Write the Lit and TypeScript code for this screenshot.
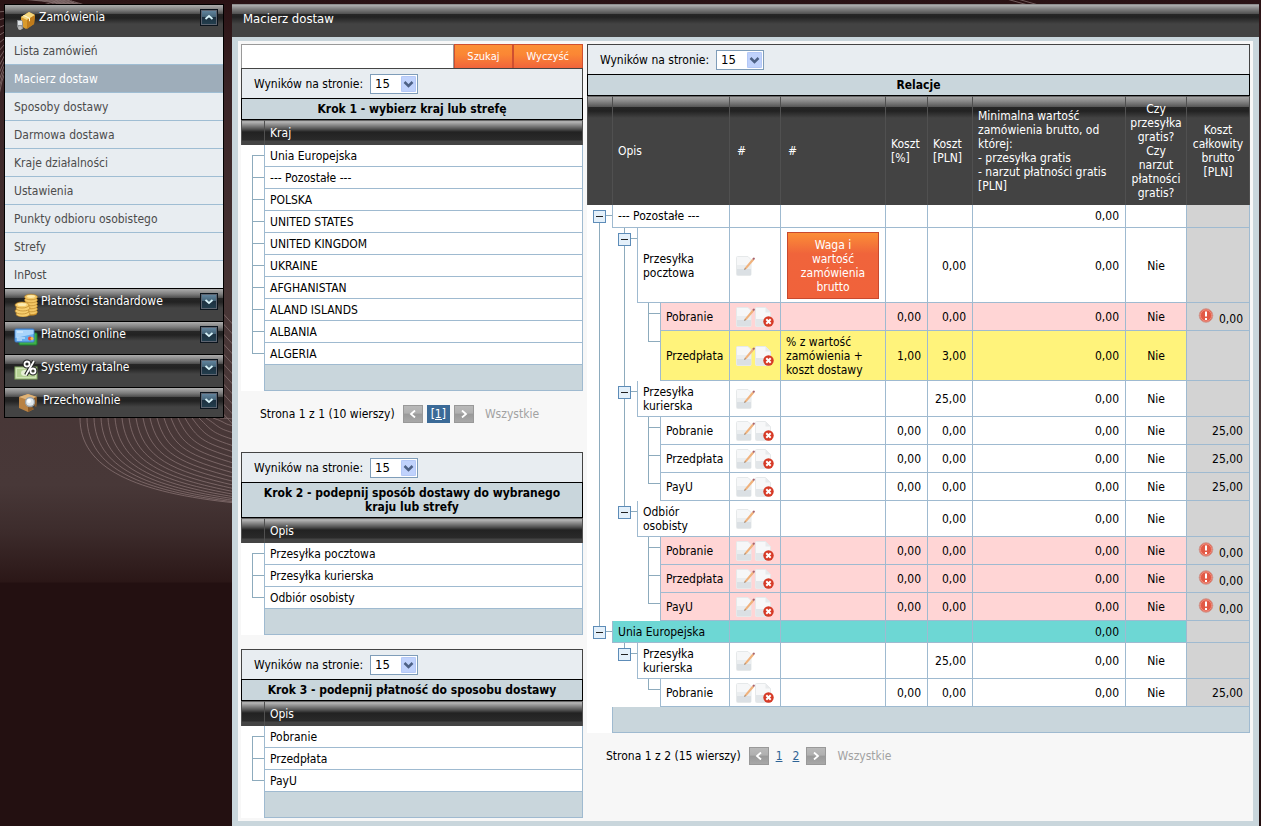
import { LitElement, html, svg, css, nothing } from "lit";
import { customElement, property } from "lit/decorators.js";
import { classMap } from "lit/directives/class-map.js";

const FONT = css`"DejaVu Sans Condensed", Tahoma, sans-serif`;

const shared = css`
  * { box-sizing: border-box; }
  button, select, input { font: inherit; margin: 0; }
  button { cursor: pointer; }
  table { border-collapse: separate; border-spacing: 0; width: 100%; table-layout: fixed; }
  caption, th, td { padding: 0; }
`;

/* ---------- decorative lines behind the page ---------- */

const lowerLines = Array.from({ length: 21 }, (_, i) => {
  const x = 80 + 7 * i;
  const endY = 503 - 0.8 * i - 0.17 * i * i;
  const drop = endY - 418;
  return `M${x} 418C${x + i * 0.8} ${418 + drop * 0.6} ${x + (236 - x) * 0.36} ${endY - drop * (0.12 + i * 0.012)} 236 ${endY}`;
}).join("");
const sideLines = Array.from({ length: 11 }, (_, i) => `M218 ${308 + i * 10}L238 ${330 + i * 10}`).join("");
const upperLines = Array.from({ length: 12 }, (_, i) =>
  `M${-2} ${100 - i * 8}Q${10 + i * 3} ${20 - i} ${86 - i * 2} ${8 - i}`).join("");
const topLines = Array.from({ length: 7 }, (_, i) =>
  `M${1 + i * 7} -2Q${40 + i * 6} -1 ${84 + i} 8`).join("");

/* ---------- icons ---------- */

const icons = {
  parcel: svg`<svg width="22" height="22" viewBox="-1 -1 22 22" aria-hidden="true">
    <path d="M6 7 14 2l6 3-1 9-8 5-5-3z" fill="#d99a2c"/><path d="M6 7 14 2l6 3-8 5z" fill="#f5d77e"/>
    <path d="m12 10 8-5-1 9-7 5z" fill="#c07c1c"/><path d="m9 5 6 3v3l-1 .6V8.500L8 5.700z" fill="#fff4cf"/>
    <path d="M2 10h5l1 3v6H4l-2-2z" fill="#8c8f92"/><path d="M3 11h4v4H3z" fill="#dfe3e6"/><circle cx="5" cy="18" r="2" fill="#bbb"/></svg>`,
  coins: svg`<svg width="24" height="24" viewBox="0 0 24 24" aria-hidden="true">
    <path d="M11 3v18c3 2 10 2 12 0V3z" fill="#c88a20"/>
    ${[19, 16, 13, 10, 7, 4].map((y) => svg`<ellipse cx="17" cy=${y} rx="6.500" ry="2.800" fill="#f3c765" stroke="#b27c22" stroke-width=".6"/>`)}
    <ellipse cx="17" cy="3.500" rx="4" ry="1.400" fill="#fde9a8"/>
    ${[21, 18, 15, 12].map((y, i) => svg`<ellipse cx=${i % 2 ? 8 : 9} cy=${y} rx="7" ry="3" fill="#f6cd6d" stroke="#b27c22" stroke-width=".6"/>`)}
    <ellipse cx="8" cy="11.500" rx="4.500" ry="1.500" fill="#fdebb0"/></svg>`,
  cards: svg`<svg width="24" height="24" viewBox="0 0 24 24" aria-hidden="true">
    <rect x="5" y="7" width="18" height="12" rx="1" fill="#3fae49" stroke="#1f7a30"/>
    <rect x="1" y="3" width="19" height="13" rx="1" fill="#66aef0" stroke="#3b7ac8"/>
    <path d="M1.500 4h18v4l-18 4z" fill="#a9d4fb"/><path d="M3 6h6M3 12h8M3 14h5" stroke="#e8f4ff"/>
    <circle cx="16" cy="12.500" r="2" fill="#e04a3a"/><circle cx="18" cy="12.500" r="1.500" fill="#f3c34a"/></svg>`,
  rates: svg`<svg width="24" height="24" viewBox="0 0 24 24" aria-hidden="true">
    <rect x="1" y="8" width="22" height="12" fill="#cfe3b5" stroke="#86ab65"/>
    <rect x="3" y="10" width="18" height="8" fill="#b4d193"/><ellipse cx="11" cy="14" rx="4" ry="3" fill="#e6f0d6"/>
    <g fill="none" stroke="#222" stroke-width="4"><circle cx="13" cy="5" r="2.500"/><circle cx="19" cy="12" r="2.500"/><path d="M20 2 12 16"/></g>
    <g fill="none" stroke="#fff" stroke-width="1.800"><circle cx="13" cy="5" r="2.500"/><circle cx="19" cy="12" r="2.500"/><path d="M20 2 12 16"/></g></svg>`,
  storage: svg`<svg width="26" height="24" viewBox="-1 0 26 24" aria-hidden="true">
    <path d="M4 5 13 2l9 3-1 11-8 4-9-4z" fill="#b98243"/><path d="m4 5 9-3 9 3-9 3z" fill="#e0b478"/>
    <path d="m13 8 9-3-1 11-8 4z" fill="#8a5a28"/><path d="m17 13 4 4" stroke="#444" stroke-width="2.500"/>
    <circle cx="15" cy="10" r="4.500" fill="#dfe7ec" stroke="#9aa1a6" stroke-width="1.300"/><circle cx="14" cy="9" r="2" fill="#fff"/></svg>`,
};

const editIcon = svg`<svg width="19" height="20" viewBox="0 0 19 20" aria-hidden="true">
  <path d="M.5 1.500Q.5.5 1.500.5h10.500l3 3v15q0 1-1 1H1.500q-1 0-1-1z" fill="#f6f7f8" stroke="#e6e9ea"/>
  <path d="M1 13h14v5.500q0 .5-.5.5H1.500q-.5 0-.5-.5z" fill="#dbe0e4"/><path d="M1 9h14v4H1z" fill="#eaedef"/>
  <path d="m8.300 13.800.7-2.300 7.300-8.700 1.700 1.400-7.400 8.600z" fill="#f0b27c"/><path d="m8.300 13.800.5-1.600 1.100.9z" fill="#5a5048"/>
  <path d="m16.300 2.800 1-1.100q.5-.4 1.100 0t.5 1l-1 1.500z" fill="#a9646c"/></svg>`;

const deleteIcon = svg`<svg width="19" height="20" viewBox="0 0 19 20" aria-hidden="true">
  <path d="M.5 1.500Q.5.5 1.500.5h9l5 5v13q0 1-1 1h-13q-1 0-1-1z" fill="#f7f8f9" stroke="#e6e9ea"/>
  <path d="M1 12h14v7H1z" fill="#e2e6e9"/><path d="M10.500.5v5h5" fill="#e8eaec"/>
  <circle cx="13.500" cy="14.500" r="5.200" fill="#d63a26"/><path d="m11.300 12.300 4.400 4.400m0-4.400-4.400 4.400" stroke="#fff" stroke-width="2"/></svg>`;

const alertIcon = svg`<svg width="16" height="16" viewBox="0 0 16 16" role="img" aria-label="Uwaga">
  <circle cx="8" cy="7.500" r="6.800" fill="#e25a46" stroke="#cf9a92"/><circle cx="8" cy="7.500" r="5.600" fill="none" stroke="#f19a8c" stroke-width=".8"/>
  <path d="M8 3.500v5" stroke="#fff" stroke-width="2"/><path d="M8 10v2" stroke="#fff" stroke-width="2"/></svg>`;

/* ---------- sidebar ---------- */

@customElement("side-menu")
export class SideMenu extends LitElement {
  static styles = [shared, css`
    :host { display: block; border: 1px solid #000; border-top: 0; font: 12px/14px ${FONT}; background: #444; }
    .head { display: flex; align-items: flex-start; width: 100%; height: 33px; padding: 4px 5px 0 9px; gap: 3px;
      border: 0; border-top: 1px solid #000; color: #fff; text-align: left;
      background: linear-gradient(#adadad 0, #7e7e7e 5px, #4a4a4a 9px, #262626 9px, #222 13px, #434343 19px); }
    .head.last { height: 30px; }
    .head svg { flex: none; }
    .label { flex: 1; padding-top: 1px; }
    .head .chev { border: 1px solid #0b141d; outline: 1px solid #5d6470; outline-offset: -2px; background: linear-gradient(#6689a3, #456478 45%, #1c3040 50%, #24404f); }
    ul { list-style: none; margin: 0; padding: 0; background: #e8edf1; }
    a { display: block; padding: 7px 9px 6px; border-bottom: 1px solid #9fbdd3; color: #4c4c4c; text-decoration: none; }
    a.current { background: #9eadba; color: #fff; }
    li:last-child a { border-bottom: 0; }
  `];

  items = ["Lista zamówień", "Macierz dostaw", "Sposoby dostawy", "Darmowa dostawa", "Kraje działalności",
    "Ustawienia", "Punkty odbioru osobistego", "Strefy", "InPost"];
  groups = [
    { icon: icons.coins, label: "Płatności standardowe" },
    { icon: icons.cards, label: "Płatności online" },
    { icon: icons.rates, label: "Systemy ratalne" },
    { icon: icons.storage, label: "Przechowalnie" },
  ];

  head(icon: unknown, label: string, open: boolean, last = false) {
    return html`<button class=${classMap({ head: true, last })} aria-expanded=${open}>
      ${icon}<span class="label">${label}</span>
      <svg class="chev" width="18" height="17" viewBox="0 0 16 15" aria-hidden="true">
        <path d=${open ? "m4.500 9 3.500-3 3.500 3" : "m4.500 6 3.500 3 3.500-3"} fill="none" stroke="#d8f4fa" stroke-width="1.800"/></svg>
    </button>`;
  }

  render() {
    return html`<nav>
      ${this.head(icons.parcel, "Zamówienia", true)}
      <ul>${this.items.map((t) => html`<li><a href="#" class=${classMap({ current: t === "Macierz dostaw" })}>${t}</a></li>`)}</ul>
      ${this.groups.map((g, i) => this.head(g.icon, g.label, false, i === 3))}
    </nav>`;
  }
}

/* ---------- page-size bar ---------- */

@customElement("size-bar")
export class SizeBar extends LitElement {
  static styles = [shared, css`
    :host { display: block; }
    label { display: flex; align-items: center; gap: 7px; height: 30px; padding-left: 12px;
      background: #e8edf1; border: 1px solid #444; border-bottom: 0; font: 12px/14px ${FONT}; }
    .pick { display: grid; }
    .pick > * { grid-area: 1 / 1; }
    select { appearance: none; width: 48px; height: 20px; padding: 0 4px; border: 1px solid #7f9db9; border-radius: 0;
      background: #fff; color: #000; font-size: 13px; }
    .arrow { justify-self: end; align-self: center; margin-right: 2px; pointer-events: none; }
  `];
  render() {
    return html`<label>Wyników na stronie:
      <span class="pick"><select><option>15</option><option>30</option></select>
        <svg class="arrow" width="15" height="16" viewBox="0 0 15 16" aria-hidden="true">
          <rect width="15" height="16" rx="1" fill="#c0d2fc"/><rect x=".5" y=".5" width="14" height="15" rx="1" fill="none" stroke="#b4c8f6"/>
          <path d="m3.500 6 4 4 4-4" fill="none" stroke="#4d6185" stroke-width="2.500"/></svg></span></label>`;
  }
}

/* ---------- pager ---------- */

@customElement("page-nav")
export class PageNav extends LitElement {
  @property({ type: Number }) pages = 1;
  @property({ type: Number }) rows = 0;
  static styles = [shared, css`
    :host { display: flex; align-items: center; height: 61px; padding: 0 19px 15px; font: 12px/14px ${FONT}; }
    button { display: grid; place-items: center; width: 20px; height: 18px; padding: 0; border: 1px solid #999;
      background: linear-gradient(#b9b9b9, #b0b0b0 45%, #999 50%, #a8a8a8); }
    .info { margin-right: 8px; }
    a { color: #2e6496; margin: 0 7px; }
    a.on { background: #3b6a97; color: #fff; padding: 2px 4px; margin: 0 4px; }
    a + a { margin-left: 3px; }
    .all { color: #a2a2a2; margin-left: 11px; }
  `];
  arrow(d: string, label: string) {
    return html`<button aria-label=${label}><svg width="8" height="8" viewBox="0 0 8 8" aria-hidden="true"><path d=${d} fill="none" stroke="#fff" stroke-width="1.800"/></svg></button>`;
  }
  render() {
    return html`<span class="info">Strona 1 z ${this.pages} (${this.rows} wierszy)</span>
      ${this.arrow("M6 .5 2 4l4 3.500", "Poprzednia")}
      ${this.pages === 1 ? html`<a class="on" href="#">[1]</a>` : html`<a href="#">1</a><a href="#">2</a>`}
      ${this.arrow("M2 .5 6 4 2 7.500", "Następna")}
      <span class="all">Wszystkie</span>`;
  }
}

const gridStyles = css`
  :host { display: block; --line: #9fbad0; --tree: #8dabbd; font: 12px/14px ${FONT}; color: #000; }
  .title { border: 1px solid #000; background: #c9d6dc; font-weight: bold; text-align: center; padding: 3px 8px; margin: 0;
    font-size: 12px; line-height: 14px; }
  table { background: #fff; }
  th { color: #fff; font-weight: normal; text-align: left; padding: 5px; border-left: 1px solid #505050; border-top: 1px solid #666; }
  td { border-left: 1px solid var(--line); border-bottom: 1px solid var(--line); padding: 4px 5px 3px; }
  td:last-child, th:last-child { border-right: 1px solid var(--line); }
  th:last-child { border-right-color: #505050; }
  td.foot { height: 26px; background: #c9d6dc; }
  td.tree { border: 0; padding: 0; vertical-align: top; background-repeat: no-repeat; --x: 12px;
    background-image: linear-gradient(var(--tree), var(--tree)), linear-gradient(var(--tree), var(--tree));
    background-size: 1px var(--vh, 0), 100% var(--hh, 0);
    background-position: var(--x) var(--vy, 0), var(--x) 10px; }
  td.leaf { --x: 11px; }
  td.thru { --vh: 100%; }
  td.end { --vh: 11px; }
  td.start { --vh: 100%; --vy: 10px; }
  td.only { --vh: 0; }
  td.tick { --hh: 1px; }
`;

/* ---------- short list panels ---------- */

@customElement("pick-list")
export class PickList extends LitElement {
  @property() heading = "";
  @property() column = "";
  @property({ attribute: false }) rows: string[] = [];
  static styles = [shared, gridStyles, css`
    .head { background: linear-gradient(#999 0, #b4b4b4 2px, #525252 9px, #222 12px, #2a2a2a 20px, #444 21px); }
    th { height: 25px; padding: 0 5px; }
    .c0 { width: 23px; }
  `];
  render() {
    const n = this.rows.length;
    return html`<size-bar></size-bar><h2 class="title">${this.heading}</h2>
      <table>
        <colgroup><col class="c0"><col></colgroup>
        <thead><tr class="head"><th></th><th scope="col">${this.column}</th></tr></thead>
        <tbody>
          ${this.rows.map((r, i) => html`<tr>
            <td class=${classMap({ tree: true, leaf: true, tick: true, start: i === 0, thru: i > 0 && i < n - 1, end: i === n - 1 })}></td>
            <td>${r}</td></tr>`)}
          <tr><td class="tree only"></td><td class="foot"></td></tr>
        </tbody>
      </table>`;
  }
}

/* ---------- relations matrix ---------- */

interface Row {
  level: 0 | 1 | 2;
  tree: string[];
  name: string;
  tone?: string;
  rule?: string;
  action?: string;
  pct?: string;
  pln?: string;
  free?: string;
  total?: string;
  alert?: boolean;
}

const leaf = (name: string, tree: string[], more: Partial<Row> = {}): Row =>
  ({ level: 2, tree, name, pct: "0,00", pln: "0,00", free: "Nie", ...more });

const PINK = { tone: "pink", total: "0,00", alert: true };
const MID = ["thru", "thru", "leaf thru tick"];
const LAST = ["thru", "thru", "leaf end tick"];

const ROWS: Row[] = [
  { level: 0, tree: ["start tick"], name: "--- Pozostałe ---" },
  { level: 1, tree: ["thru", "thru tick"], name: "Przesyłka pocztowa", action: "Waga i wartość zamówienia brutto", pln: "0,00", free: "Nie" },
  leaf("Pobranie", MID, PINK),
  leaf("Przedpłata", LAST, { tone: "yellow", rule: "% z wartość zamówienia + koszt dostawy", pct: "1,00", pln: "3,00" }),
  { level: 1, tree: ["thru", "thru tick"], name: "Przesyłka kurierska", pln: "25,00", free: "Nie" },
  leaf("Pobranie", MID, { total: "25,00" }),
  leaf("Przedpłata", MID, { total: "25,00" }),
  leaf("PayU", LAST, { total: "25,00" }),
  { level: 1, tree: ["thru", "end tick"], name: "Odbiór osobisty", pln: "0,00", free: "Nie" },
  leaf("Pobranie", ["thru", "only", "leaf thru tick"], PINK),
  leaf("Przedpłata", ["thru", "only", "leaf thru tick"], PINK),
  leaf("PayU", ["thru", "only", "leaf end tick"], PINK),
  { level: 0, tree: ["end tick"], name: "Unia Europejska", tone: "teal" },
  { level: 1, tree: ["only", "end tick"], name: "Przesyłka kurierska", pln: "25,00", free: "Nie" },
  leaf("Pobranie", ["only", "only", "leaf end tick"], { total: "25,00" }),
];

@customElement("relation-grid")
export class RelationGrid extends LitElement {
  static styles = [shared, gridStyles, css`
    .head { background: linear-gradient(#aaa 0, #8a8a8a 5px, #555 11px, #262626 11px, #222 15px, #434343 22px); }
    .c25 { width: 25px; } .c23 { width: 23px; } .desc { width: 69px; } .tools { width: 51px; } .rule { width: 105px; }
    .pct { width: 42px; } .pln { width: 45px; } .free { width: 61px; } .total { width: 64px; }
    th.mid, td.mid { text-align: center; }
    th.mid { padding: 5px 2px; }
    th.hash { padding-left: 7px; }
    tbody tr:first-child td:not(.tree) { padding-bottom: 4px; }
    td.num { text-align: right; padding-right: 6px; }
    td.icons { padding-left: 6px; padding-right: 0; }
    td.sum { background: #d3d3d3; }
    .pink td:not(.tree):not(.sum) { background: #ffd5d5; }
    .yellow td:not(.tree):not(.sum) { background: #fff37b; }
    .teal td:not(.tree):not(.sum) { background: #6dd7d4; }
    .tb { display: flex; }
    .tb a { display: block; height: 20px; }
    .tb svg, .alert svg { display: block; }
    .alert { display: flex; justify-content: flex-end; align-items: flex-end; gap: 5px; }
    .alert svg { margin-bottom: 2px; }
    .toggle { display: grid; place-items: center; width: 13px; height: 13px; margin: 5px 0 0 6px; padding: 0;
      border: 1px solid #5d8cb8; background: #e4f0fa; }
    .toggle::before { content: ""; width: 7px; height: 1px; background: #222; }
    .fill { display: block; width: calc(100% - 2px); margin: 0 auto; padding: 5px 10px 4px; border: 1px solid #c8492e; color: #fff;
      background: linear-gradient(#fb8e37, #f0643b 32%, #f0623b); }
  `];

  row(r: Row) {
    const last = r.tree.length - 1;
    return html`<tr class=${r.tone ?? "plain"}>
      ${r.tree.map((t, i) => html`<td class="tree ${t}">${i === last && r.level < 2
        ? html`<button class="toggle" aria-label="Zwiń"></button>` : nothing}</td>`)}
      <td colspan=${3 - r.level}>${r.name}</td>
      <td class="icons">${r.level > 0 ? html`<div class="tb"><a href="#" aria-label="Edytuj">${editIcon}</a>
        ${r.level === 2 ? html`<a href="#" aria-label="Usuń">${deleteIcon}</a>` : nothing}</div>` : nothing}</td>
      <td>${r.action ? html`<button class="fill">${r.action}</button>` : r.rule ?? nothing}</td>
      <td class="num">${r.pct}</td>
      <td class="num">${r.pln}</td>
      <td class="num">0,00</td>
      <td class="mid">${r.free}</td>
      <td class="num sum">${r.alert ? html`<div class="alert">${alertIcon}<span>${r.total}</span></div>` : r.total}</td>
    </tr>`;
  }

  render() {
    return html`<size-bar></size-bar><h2 class="title">Relacje</h2>
      <table>
        <colgroup><col class="c25"><col class="c25"><col class="c23"><col class="desc"><col class="tools"><col class="rule">
          <col class="pct"><col class="pln"><col><col class="free"><col class="total"></colgroup>
        <thead><tr class="head"><th></th><th scope="col" colspan="3">Opis</th><th scope="col" class="hash">#</th><th scope="col" class="hash">#</th>
          <th scope="col">Koszt [%]</th><th scope="col">Koszt [PLN]</th>
          <th scope="col">Minimalna wartość zamówienia brutto, od której:<br>- przesyłka gratis<br>- narzut płatności gratis [PLN]</th>
          <th scope="col" class="mid">Czy przesyłka gratis?<br>Czy narzut płatności gratis?</th>
          <th scope="col" class="mid">Koszt całkowity brutto [PLN]</th></tr></thead>
        <tbody>${ROWS.map((r) => this.row(r))}
          <tr><td class="tree only"></td><td class="foot" colspan="10"></td></tr></tbody>
      </table>`;
  }
}

/* ---------- page ---------- */

@customElement("app-root")
export class AppRoot extends LitElement {
  static styles = [shared, css`
    :host { display: block; position: relative; min-height: 100vh; overflow: hidden; font: 12px/14px ${FONT};
      background: linear-gradient(#2a1214 0, #3a2426 90px, #473535 300px, #483838 485px, #3d2c2c 530px, #2b1717 582px, #231011 583px); }
    .waves { position: absolute; inset: 0; width: 100%; height: 100%; }
    .page { position: relative; display: grid; grid-template-columns: 220px minmax(0, 1fr); column-gap: 8px; align-items: start;
      padding: 4px 2px 0 4px; }
    main { background: #c9d6dc; padding: 0 6px 5px; }
    h1 { margin: 0 -6px 4px; height: 33px; padding: 7px 11px; color: #fff; font-size: 13px; line-height: 15px; font-weight: normal;
      background: linear-gradient(#6e6e6e 0, #b0b0b0 1px, #808080 5px, #4e4e4e 10px, #262626 10px, #222 13px, #434343 20px); }
    .body { display: grid; grid-template-columns: minmax(0, 342fr) minmax(0, 663fr); gap: 4px; align-items: start; padding: 3px; background: #f7f7f7; }
    .search { display: flex; height: 24px; }
    .search input { flex: 1; min-width: 0; border: 1px solid #999; border-bottom: 0; background: #fff; padding: 0 4px; }
    .search button { padding: 0 13px 0 12px; border: 1px solid #cf4f30; border-bottom: 0; color: #fff; font-size: 11px;
      background: linear-gradient(#fb8f36, #fb8734 40%, #f0643c); }
    .gap { margin-top: 14px; }
  `];

  countries = ["Unia Europejska", "--- Pozostałe ---", "POLSKA", "UNITED STATES", "UNITED KINGDOM", "UKRAINE",
    "AFGHANISTAN", "ALAND ISLANDS", "ALBANIA", "ALGERIA"];

  render() {
    return html`
      <svg class="waves" aria-hidden="true" fill="none" stroke="#8a7474" stroke-width="1" stroke-opacity=".75">
        <path d=${lowerLines}/><path d=${sideLines}/><path d=${upperLines}/><path d=${topLines}/>
        <path d="M1003 -2 1028 5M1014 -2 1042 6"/>
      </svg>
      <div class="page">
        <side-menu></side-menu>
        <main>
          <h1>Macierz dostaw</h1>
          <div class="body">
            <section>
              <form class="search"><input type="text" aria-label="Szukaj kraju"><button type="button">Szukaj</button><button type="button">Wyczyść</button></form>
              <pick-list heading="Krok 1 - wybierz kraj lub strefę" column="Kraj" .rows=${this.countries}></pick-list>
              <page-nav .pages=${1} .rows=${10}></page-nav>
              <pick-list heading="Krok 2 - podepnij sposób dostawy do wybranego kraju lub strefy" column="Opis"
                .rows=${["Przesyłka pocztowa", "Przesyłka kurierska", "Odbiór osobisty"]}></pick-list>
              <pick-list class="gap" heading="Krok 3 - podepnij płatność do sposobu dostawy" column="Opis"
                .rows=${["Pobranie", "Przedpłata", "PayU"]}></pick-list>
            </section>
            <section>
              <relation-grid></relation-grid>
              <page-nav .pages=${2} .rows=${15}></page-nav>
            </section>
          </div>
        </main>
      </div>`;
  }
}
